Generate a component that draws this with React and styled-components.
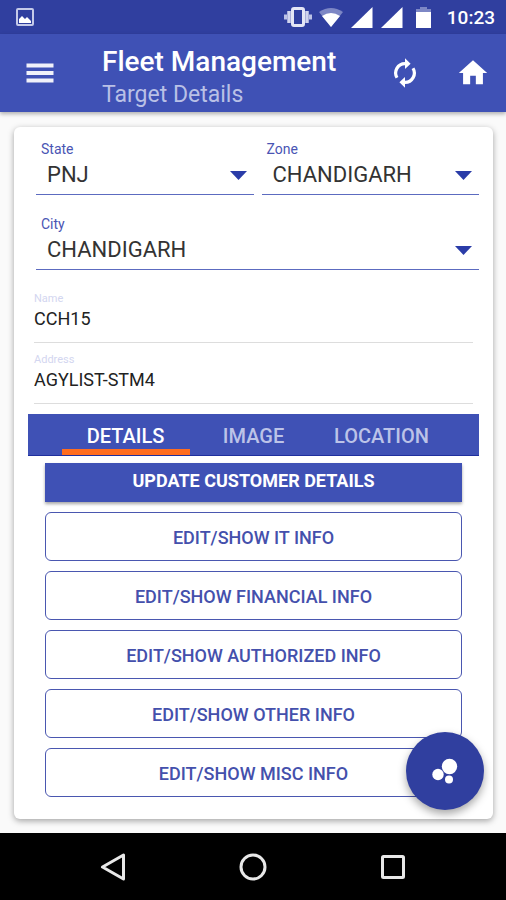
import React, {useState} from 'react'
import styled, {createGlobalStyle} from 'styled-components'
import {MdHome} from 'react-icons/md'

const GlobalStyle = createGlobalStyle `
* {
	box-sizing:border-box;
}
body {
	margin:0;
	background-color:#FAFAFA;
	font-family:Roboto, sans-serif;
}
button, input, select {
	font-family:inherit;
}
`

const Screen = styled.div `
display:flex;
flex-direction:column;
min-height:100vh;
`

const StatusBar = styled.div `
display:flex;
align-items:center;
height:34px;
padding:0 11px 0 16px;
background-color:#303F9F;
color:white;
`

const StatusIcons = styled.div `
display:flex;
align-items:center;
gap:7px;
margin-left:auto;
`

const Clock = styled.div `
margin-left:2px;
font-size:19px;
font-weight:500;
`

const AppBar = styled.header `
display:flex;
align-items:center;
height:78px;
padding:0 16px 0 22px;
background-color:#3F51B5;
box-shadow:0 2px 4px rgba(0, 0, 0, 0.3);
`

const IconButton = styled.button `
display:flex;
padding:0;
border:none;
background:none;
color:white;
font-size:34px;
&:hover {
	cursor:pointer;
}
`

const Titles = styled.div `
flex:1;
margin-left:44px;
padding-top:10px;
`

const Title = styled.h1 `
margin:0;
font-size:28px;
line-height:34px;
font-weight:500;
color:white;
`

const Subtitle = styled.div `
font-size:23px;
line-height:32px;
color:#B9C0E6;
`

const Actions = styled.div `
display:flex;
align-items:center;
gap:35px;
`

const Main = styled.main `
position:relative;
flex:1;
padding:15px 13px 14px 14px;
`

const Card = styled.section `
display:flex;
flex-direction:column;
padding:14px 14px 22px;
border-radius:6px;
background-color:white;
box-shadow:0 2px 6px rgba(0, 0, 0, 0.35);
`

const Selects = styled.div `
display:grid;
grid-template-columns:1fr 1fr;
gap:21px 8px;
padding-left:8px;
`

const SelectField = styled.label `
display:grid;
grid-template-rows:16px 37px;
align-items:center;
grid-column:${props => props.$wide ? '1 / -1' : 'auto'};
border-bottom:1px solid #5C6BC0;
`

const SelectLabel = styled.span `
padding-left:5px;
font-size:14px;
line-height:16px;
color:#4A55B4;
`

const Select = styled.select `
grid-area:2 / 1;
width:100%;
padding:0 40px 2px 11px;
border:none;
background:none;
appearance:none;
font-size:22px;
line-height:34px;
color:#333;
`

const Caret = styled.svg `
grid-area:2 / 1;
justify-self:end;
margin-right:7px;
pointer-events:none;
`

const Inputs = styled.div `
display:grid;
gap:8px;
padding:20px 6px 10px;
`

const InputField = styled.label `
display:flex;
flex-direction:column;
border-bottom:1px solid #DDD;
`

const InputLabel = styled.span `
font-size:11px;
line-height:18px;
color:#D3D6F0;
`

const Input = styled.input `
width:100%;
height:34px;
padding:0 0 14px;
border:none;
background:none;
font-size:18px;
line-height:20px;
color:#222;
`

const Tabs = styled.div `
display:flex;
justify-content:center;
height:42px;
background-color:#3F51B5;
border-bottom:1px solid #1F2F9E;
`

const Tab = styled.button `
width:128px;
padding:8px 0 0;
border:none;
border-bottom:6px solid ${props => props.$active ? '#FF6D1F' : 'transparent'};
background:none;
font-size:20px;
font-weight:500;
color:${props => props.$active ? 'white' : '#BCC3E8'};
&:hover {
	cursor:pointer;
}
`

const Buttons = styled.div `
display:flex;
flex-direction:column;
gap:10px;
padding:7px 17px 0;
`

const UpdateButton = styled.button `
height:39px;
padding:0 0 4px;
border:none;
background-color:#3F51B5;
box-shadow:0 2px 3px rgba(0, 0, 0, 0.35);
font-size:18px;
font-weight:700;
color:white;
&:hover {
	cursor:pointer;
}
`

const InfoButton = styled.button `
height:49px;
padding:2px 0 0;
border:1px solid #4A57B0;
border-radius:6px;
background-color:white;
font-size:18px;
font-weight:500;
color:#4450AC;
&:hover {
	cursor:pointer;
}
`

const Fab = styled.button `
position:absolute;
right:22px;
bottom:23px;
display:flex;
align-items:center;
justify-content:center;
width:78px;
height:78px;
border:none;
border-radius:50%;
background-color:#303F9F;
box-shadow:0 4px 8px rgba(0, 0, 0, 0.35);
&:hover {
	cursor:pointer;
}
`

const NavBar = styled.nav `
display:grid;
grid-template-columns:repeat(3, 1fr);
height:67px;
padding:0 43px;
background-color:black;
`

const NavButton = styled.button `
display:flex;
align-items:center;
justify-content:center;
padding:0;
border:none;
background:none;
`

const selects = [
	{id:'state', label:'State', value:'PNJ'},
	{id:'zone', label:'Zone', value:'CHANDIGARH'},
	{id:'city', label:'City', value:'CHANDIGARH', wide:true}
]

const inputs = [
	{id:'name', label:'Name', value:'CCH15'},
	{id:'address', label:'Address', value:'AGYLIST-STM4'}
]

const tabs = ['DETAILS', 'IMAGE', 'LOCATION']

const infos = ['IT', 'FINANCIAL', 'AUTHORIZED', 'OTHER', 'MISC']

function PictureIcon () {
	return (
		<svg width="18" height="18" viewBox="0 0 18 18">
			<rect x="1" y="1" width="16" height="16" rx="1" fill="none" stroke="#C5CAE9" strokeWidth="2"/>
			<path d="M3 15v-4l3-3 3 3 2-2 4 4v2z" fill="white"/>
		</svg>
	)
}

function VibrateIcon () {
	return (
		<svg width="28" height="22" viewBox="0 0 28 22">
			<rect x="8.5" y="2.500" width="11" height="17" rx="1.5" fill="none" stroke="#E4E6F5" strokeWidth="3"/>
			<path d="M5 5v12M23 5v12" stroke="#D0D4EE" strokeWidth="3.500"/>
			<path d="M1.5 8.500v5M26.5 8.500v5" stroke="#BCC2E6" strokeWidth="3"/>
		</svg>
	)
}

function WifiIcon () {
	return (
		<svg width="24" height="22" viewBox="0 0 24 22">
			<path d="M0 6Q12-2 24 6L12 21z" fill="#7D87C5"/>
			<path d="M3 10Q12 4 21 10L12 21z" fill="white"/>
		</svg>
	)
}

function SignalIcon () {
	return (
		<svg width="23" height="22" viewBox="0 0 23 22">
			<path d="M22.500 1v21H1z" fill="white"/>
		</svg>
	)
}

function BatteryIcon () {
	return (
		<svg width="28" height="22" viewBox="0 0 28 22">
			<path d="M10 1h7v2h4v3H6V3h4z" fill="#7D87C5"/>
			<path d="M6 6h15v16H6z" fill="white"/>
		</svg>
	)
}

function MenuIcon () {
	return (
		<svg width="36" height="36" viewBox="0 0 36 36">
			<path d="M4.500 10.500h27M4.500 18h27M4.500 25.500h27" stroke="#F0F1FA" strokeWidth="4"/>
		</svg>
	)
}

function RefreshIcon () {
	return (
		<svg width="32" height="32" viewBox="0 0 24 24">
			<path d="M6 15.600A7 7 0 0 1 12 5M18 8.400A7 7 0 0 1 12 19" fill="none" stroke="white" strokeWidth="2.400"/>
			<path d="M12 1l4.200 4-4.200 4zM12 23l-4.200-4 4.200-4z" fill="white"/>
		</svg>
	)
}

function BubblesIcon () {
	return (
		<svg width="28" height="28" viewBox="0 0 28 28" fill="white">
			<circle cx="18.5" cy="9.5" r="7.7"/>
			<circle cx="7" cy="17.5" r="5.7"/>
			<circle cx="18" cy="22.5" r="4"/>
		</svg>
	)
}

export default function App () {
	const [activeTab, setActiveTab] = useState('DETAILS')

	return (
		<Screen>
			<GlobalStyle/>
			<StatusBar>
				<PictureIcon/>
				<StatusIcons>
					<VibrateIcon/>
					<WifiIcon/>
					<SignalIcon/>
					<SignalIcon/>
					<BatteryIcon/>
					<Clock>10:23</Clock>
				</StatusIcons>
			</StatusBar>
			<AppBar>
				<IconButton aria-label="Menu"><MenuIcon/></IconButton>
				<Titles>
					<Title>Fleet Management</Title>
					<Subtitle>Target Details</Subtitle>
				</Titles>
				<Actions>
					<IconButton aria-label="Refresh"><RefreshIcon/></IconButton>
					<IconButton aria-label="Home"><MdHome/></IconButton>
				</Actions>
			</AppBar>
			<Main>
				<Card>
					<Selects>
						{selects.map(select =>
						<SelectField key={select.id} $wide={select.wide}>
							<SelectLabel>{select.label}</SelectLabel>
							<Select name={select.id}>
								<option>{select.value}</option>
							</Select>
							<Caret width="17" height="9" viewBox="0 0 17 9"><path d="M0 0h17L8.500 9z" fill="#2A3CA8"/></Caret>
						</SelectField>
						)}
					</Selects>
					<Inputs>
						{inputs.map(input =>
						<InputField key={input.id}>
							<InputLabel>{input.label}</InputLabel>
							<Input name={input.id} defaultValue={input.value}/>
						</InputField>
						)}
					</Inputs>
					<Tabs role="tablist">
						{tabs.map(tab =>
						<Tab key={tab} role="tab" aria-selected={tab === activeTab} $active={tab === activeTab} onClick={() => setActiveTab(tab)}>{tab}</Tab>
						)}
					</Tabs>
					<Buttons>
						<UpdateButton>UPDATE CUSTOMER DETAILS</UpdateButton>
						{infos.map(info => <InfoButton key={info}>EDIT/SHOW {info} INFO</InfoButton>)}
					</Buttons>
				</Card>
				<Fab aria-label="More actions"><BubblesIcon/></Fab>
			</Main>
			<NavBar>
				<NavButton aria-label="Back">
					<svg width="28" height="28" viewBox="0 0 28 28"><path d="M24.500 2v24L3.500 14z" fill="none" stroke="#E8E8E8" strokeWidth="3" strokeLinejoin="round"/></svg>
				</NavButton>
				<NavButton aria-label="Home screen">
					<svg width="28" height="28" viewBox="0 0 28 28"><circle cx="14" cy="14" r="12" fill="none" stroke="#E8E8E8" strokeWidth="3"/></svg>
				</NavButton>
				<NavButton aria-label="Recent apps">
					<svg width="28" height="28" viewBox="0 0 28 28"><rect x="3.500" y="3.500" width="21" height="21" rx="1" fill="none" stroke="#E8E8E8" strokeWidth="3"/></svg>
				</NavButton>
			</NavBar>
		</Screen>
	)
}
